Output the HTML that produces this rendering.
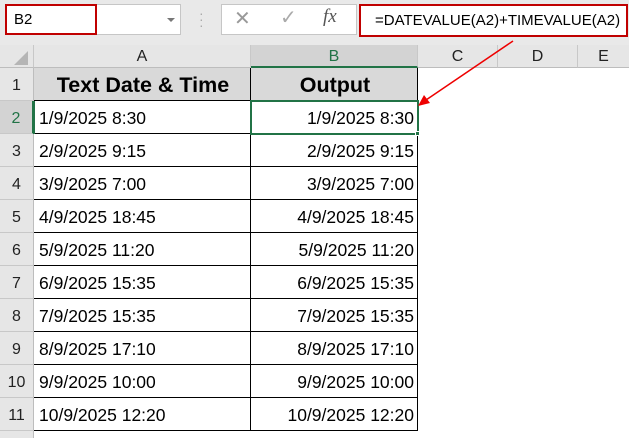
<!DOCTYPE html><html><head><style>
body{margin:0;width:629px;height:438px;background:#fff;position:relative;font-family:"Liberation Sans",Arial,sans-serif;overflow:hidden}
.a{position:absolute;box-sizing:border-box}
.ch{position:absolute;top:45px;height:23px;font-size:16px;color:#222;text-align:center;line-height:23px;background:#e6e6e6;border-right:1px solid #c8c8c8;border-bottom:1px solid #bdbdbd;box-sizing:border-box}
.rh{position:absolute;left:0;width:33px;font-size:16px;color:#222;text-align:center;background:#e6e6e6;border-bottom:1px solid #c8c8c8;border-right:1px solid #bdbdbd;box-sizing:border-box;padding-top:9px}
.c{position:absolute;font-size:17.5px;color:#000;box-sizing:border-box;border-right:1px solid #000;border-bottom:1px solid #000;line-height:34px;padding:0 3px 0 5px;white-space:nowrap}
</style></head><body>
<div class="a" style="left:0;top:0;width:629px;height:45px;background:#e9e9e9"></div>
<div class="a" style="left:5px;top:4px;width:176px;height:31px;background:#fff;border:1px solid #c6c6c6"></div>
<div class="a" style="left:5px;top:4px;width:92px;height:31px;border:2px solid #c00000;font-size:15px;line-height:27px;padding-left:7px">B2</div>
<div class="a" style="left:167px;top:18px;width:0;height:0;border-left:4px solid transparent;border-right:4px solid transparent;border-top:4px solid #777"></div>
<div class="a" style="left:199px;top:10px;color:#aaa;font-size:14px;line-height:6px">·<br>·<br>·</div>
<div class="a" style="left:221px;top:4px;width:136px;height:31px;background:#fff;border:1px solid #c6c6c6"></div>
<div class="a" style="left:234px;top:6px;font-size:20px;color:#999">✕</div>
<div class="a" style="left:280px;top:5px;font-size:20px;color:#aaa">✓</div>
<div class="a" style="left:323px;top:6px;font-size:19px;color:#555;font-family:'Liberation Serif',serif;font-style:italic">fx</div>
<div class="a" style="left:359px;top:4px;width:269px;height:33px;background:#fff;border:2px solid #c00000;font-size:15px;line-height:29px;padding-left:14px;white-space:nowrap">=DATEVALUE(A2)+TIMEVALUE(A2)</div>
<div class="ch" style="left:0;width:34px;background:#e6e6e6"></div>
<div class="a" style="left:14px;top:51px;width:0;height:0;border-left:14px solid transparent;border-bottom:14px solid #b5b5b5"></div>
<div class="ch" style="left:34px;width:217px">A</div>
<div class="ch" style="left:251px;width:167px;background:#d3d3d3;color:#217346;border-bottom:2px solid #217346">B</div>
<div class="ch" style="left:418px;width:80px">C</div>
<div class="ch" style="left:498px;width:80px">D</div>
<div class="ch" style="left:578px;width:51px;border-right:0">E</div>
<div class="a" style="left:0;top:431px;width:34px;height:7px;background:#e6e6e6;border-right:1px solid #bdbdbd"></div>
<div class="rh" style="top:68px;height:33px;width:34px">1</div>
<div class="rh" style="top:101px;height:33px;width:34px;background:#d3d3d3;color:#217346;border-right:2px solid #217346">2</div>
<div class="rh" style="top:134px;height:33px;width:34px">3</div>
<div class="rh" style="top:167px;height:33px;width:34px">4</div>
<div class="rh" style="top:200px;height:33px;width:34px">5</div>
<div class="rh" style="top:233px;height:33px;width:34px">6</div>
<div class="rh" style="top:266px;height:33px;width:34px">7</div>
<div class="rh" style="top:299px;height:33px;width:34px">8</div>
<div class="rh" style="top:332px;height:33px;width:34px">9</div>
<div class="rh" style="top:365px;height:33px;width:34px">10</div>
<div class="rh" style="top:398px;height:33px;width:34px">11</div>
<div class="c" style="left:34px;top:68px;width:217px;height:33px;background:#d9d9d9;font-weight:bold;font-size:21.5px;text-align:center">Text Date &amp; Time</div>
<div class="c" style="left:251px;top:68px;width:167px;height:33px;background:#d9d9d9;font-weight:bold;font-size:21.5px;text-align:center">Output</div>
<div id="g"></div>
<script>
var d=["1/9/2025 8:30","2/9/2025 9:15","3/9/2025 7:00","4/9/2025 18:45","5/9/2025 11:20","6/9/2025 15:35","7/9/2025 15:35","8/9/2025 17:10","9/9/2025 10:00","10/9/2025 12:20"],h="";
d.forEach(function(t,i){var y=101+i*33;h+='<div class="c" style="left:34px;top:'+y+'px;width:217px;height:33px">'+t+'</div><div class="c" style="left:251px;top:'+y+'px;width:167px;height:33px;text-align:right">'+t+'</div>';});
document.getElementById("g").innerHTML=h;
</script>
<div class="a" style="left:250px;top:100px;width:169px;height:35px;border:2px solid #217346"></div>
<div class="a" style="left:415px;top:131px;width:5px;height:5px;background:#217346;border:1px solid #fff"></div>
<div class="a" style="left:33px;top:101px;width:2px;height:33px;background:#217346"></div>
<svg class="a" style="left:0;top:0" width="629" height="438"><line x1="513" y1="41" x2="426" y2="100" stroke="#e00" stroke-width="1.5"/><polygon points="418,106 424,95 430,103" fill="#e00"/></svg>
</body></html>
